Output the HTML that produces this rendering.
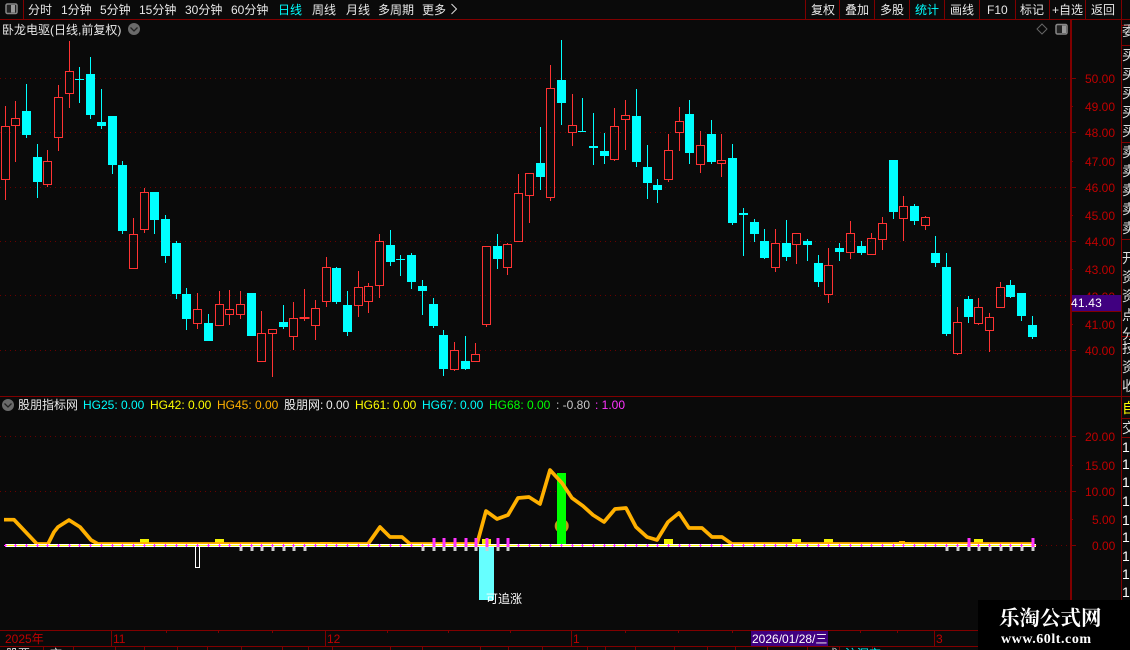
<!DOCTYPE html>
<html lang="zh">
<head>
<meta charset="utf-8">
<title>卧龙电驱</title>
<style>
html,body{margin:0;padding:0;background:#0a0a0a;width:1130px;height:650px;overflow:hidden}
#root{position:relative;width:1130px;height:650px;overflow:hidden;font:12px/14px "Liberation Sans","WenQuanYi Zen Hei","Noto Sans CJK SC",sans-serif;color:#e8e8e8;background:#0a0a0a}
svg{position:absolute;left:0;top:0}
span,div.t{position:absolute;white-space:nowrap}
.c{color:#0ff}.y{color:#ff0}.o{color:#ffb000}.g{color:#0f0}.m{color:#f3f}.w{color:#eee}.a{color:#c00000}
#rp{position:absolute;left:1122px;top:0;width:8px;height:650px;overflow:hidden;font-size:14px;color:#ddd}
</style>
</head>
<body>
<div id="root">
<svg width="1130" height="650" viewBox="0 0 1130 650" shape-rendering="crispEdges">
<!-- grid -->
<path d="M0 78.5H1070M0 132.5H1070M0 187.5H1070M0 241.5H1070M0 295.5H1070M0 350.5H1070M0 436.5H1070M0 491.5H1070M1036 545.5H1070" stroke="#6a0000" stroke-width="1" stroke-dasharray="1 4" fill="none"/>
<!-- frame -->
<path d="M0 19.5H1130M0 396.5H1130M0 630.5H1121M0 646.5H1121M1070.5 19V630M1071.5 19V630M1121.5 0V650M1121 25.5H1130M1121 45.5H1130M1121 142.5H1130M1121 239.5H1130M1121 336.5H1130M1121 418.5H1130M1121 437.5H1130M23.5 0V19M805.5 0V19M839.5 0V19M874.5 0V19M909.5 0V19M944.5 0V19M979.5 0V19M1015.5 0V19M1049.5 0V19M1085.5 0V19M111.5 630V646M325.5 630V646M571.5 630V646M934.5 630V646M166.5 630V633M218.5 630V633M272.5 630V633M387.5 630V633M448.5 630V633M510.5 630V633M625.5 630V633M678.5 630V633M732.5 630V633M860.5 630V633M897.5 630V633M43.5 646V650M73.5 646V650M115.5 646V650M144.5 646V650M177.5 646V650M207.5 646V650M241.5 646V650M282.5 646V650M308.5 646V650M332.5 646V650M390.5 646V650M422.5 646V650M480.5 646V650M508.5 646V650M542.5 646V650M587.5 646V650M605.5 646V650M635.5 646V650M674.5 646V650M707.5 646V650M735.5 646V650M767.5 646V650M807.5 646V650M839.5 646V650M872.5 646V650M1071 78.5H1076M1071 106.5H1073M1071 132.5H1076M1071 161.5H1073M1071 187.5H1076M1071 215.5H1073M1071 241.5H1076M1071 269.5H1073M1071 324.5H1073M1071 350.5H1076M1071 436.5H1076M1071 465.5H1073M1071 491.5H1076M1071 519.5H1073M1071 545.5H1076" stroke="#800000" stroke-width="1" fill="none"/>
<!-- red candles -->
<path fill="none" stroke="#ff3333" stroke-width="1" d="M1.5 126.5h8v53h-8zM5.5 106V126M5.5 180V200M11.5 118.5h8v7h-8zM15.5 101V118M15.5 126V162M43.5 161.5h8v23h-8zM47.5 150V161M47.5 185V187M54.5 97.5h8v40h-8zM58.5 85V97M58.5 138V151M65.5 71.5h8v22h-8zM69.5 41V71M69.5 94V108M140.5 192.5h8v37h-8zM144.5 188V192M144.5 230V233M129.5 234.5h8v34h-8zM133.5 218V234M193.5 309.5h8v14h-8zM197.5 293V309M197.5 324V329M215.5 304.5h8v21h-8zM219.5 291V304M225.5 309.5h8v5h-8zM229.5 290V309M229.5 315V325M236.5 304.5h8v10h-8zM240.5 291V304M240.5 315V319M257.5 333.5h8v28h-8zM261.5 311V333M268.5 329.5h8v4h-8zM272.5 334V377M289.5 318.5h8v18h-8zM293.5 302V318M293.5 337V350M300 317.5h9v1h-9zM304.5 289V321M311.5 308.5h8v17h-8zM315.5 300V308M315.5 326V340M322.5 267.5h8v34h-8zM326.5 257V267M326.5 302V307M354.5 287.5h8v18h-8zM358.5 271V287M358.5 306V317M364.5 286.5h8v15h-8zM368.5 283V286M368.5 302V313M375.5 241.5h8v44h-8zM379.5 234V241M379.5 286V298M450.5 350.5h8v19h-8zM454.5 342V350M454.5 370V371M471.5 354.5h8v7h-8zM475.5 343V354M482.5 246.5h8v78h-8zM486.5 325V327M503.5 244.5h8v23h-8zM507.5 243V244M507.5 268V275M514.5 193.5h8v48h-8zM518.5 174V193M525.5 173.5h8v22h-8zM529.5 196V223M546.5 88.5h8v109h-8zM550.5 65V88M550.5 198V201M568.5 125.5h8v7h-8zM572.5 94V125M572.5 133V146M610.5 126.5h8v33h-8zM614.5 108V126M614.5 160V161M621.5 115.5h8v4h-8zM625.5 100V115M625.5 120V150M664.5 150.5h8v29h-8zM668.5 134V150M668.5 180V182M675.5 121.5h8v11h-8zM679.5 107V121M679.5 133V151M696.5 145.5h8v19h-8zM700.5 131V145M700.5 165V173M717.5 160.5h8v3h-8zM721.5 134V160M721.5 164V177M771.5 243.5h8v24h-8zM775.5 229V243M775.5 268V272M792.5 233.5h8v11h-8zM796.5 245V264M824.5 265.5h8v29h-8zM828.5 248V265M828.5 295V303M846.5 233.5h8v19h-8zM850.5 221V233M850.5 253V259M867.5 238.5h8v16h-8zM871.5 233V238M878.5 223.5h8v16h-8zM882.5 217V223M882.5 240V250M899.5 206.5h8v12h-8zM903.5 196V206M903.5 219V241M921.5 217.5h8v8h-8zM925.5 216V217M925.5 226V230M953.5 322.5h8v31h-8zM957.5 307V322M957.5 354V355M974.5 307.5h8v16h-8zM978.5 298V307M978.5 324V325M985.5 317.5h8v13h-8zM989.5 313V317M989.5 331V352M996.5 287.5h8v20h-8zM1000.5 282V287"/>
<!-- cyan wicks -->
<path fill="none" stroke="#00ffff" stroke-width="1" d="M26.5 84V138M37.5 144V198M79.5 67V103M90.5 57V119M101.5 89V129M112.5 116V174M122.5 161V234M154.5 192V234M165.5 215V263M176.5 241V299M186.5 288V330M208.5 314V341M283.5 305V329M336.5 267V304M347.5 291V336M390.5 230V266M400.5 255V276M411.5 253V289M422.5 280V315M433.5 298V328M443.5 330V376M465.5 336V370M497.5 234V269M540.5 127V190M561.5 40V125M582.5 98V132M593.5 113V165M604.5 133V164M636.5 89V167M647.5 145V199M657.5 179V203M689.5 100V164M711.5 120V164M732.5 144V225M743.5 208V256M754.5 219V242M764.5 229V259M786.5 220V261M807.5 239V261M818.5 255V287M839.5 243V261M861.5 241V255M893.5 160V219M914.5 204V225M935.5 236V267M946.5 253V336M968.5 296V323M1010.5 280V298M1021.5 293V321M1032.5 316V339"/>
<!-- cyan bodies -->
<path fill="#00ffff" d="M22 111h9v24h-9zM33 157h9v25h-9zM75 79h9v1h-9zM86 74h9v41h-9zM97 122h9v4h-9zM108 116h9v49h-9zM118 165h9v66h-9zM150 192h9v28h-9zM161 219h9v37h-9zM172 243h9v51h-9zM182 294h9v25h-9zM204 323h9v18h-9zM247 293h9v43h-9zM279 322h9v5h-9zM332 268h9v34h-9zM343 305h9v27h-9zM386 245h9v17h-9zM396 259h9v1h-9zM407 255h9v27h-9zM418 286h9v5h-9zM429 304h9v22h-9zM439 335h9v34h-9zM461 361h9v8h-9zM493 246h9v13h-9zM536 163h9v14h-9zM557 80h9v23h-9zM578 131h8v1h-8zM589 146h9v2h-9zM600 151h9v5h-9zM632 116h9v46h-9zM643 167h9v16h-9zM653 185h9v5h-9zM685 114h9v39h-9zM707 134h9v28h-9zM728 158h9v65h-9zM739 213h9v2h-9zM750 222h9v12h-9zM760 241h9v17h-9zM782 243h9v14h-9zM803 241h9v4h-9zM814 263h9v19h-9zM835 248h9v4h-9zM857 246h9v7h-9zM889 160h9v52h-9zM910 206h9v15h-9zM931 253h9v10h-9zM942 267h9v67h-9zM964 299h9v18h-9zM1006 285h9v12h-9zM1017 293h9v23h-9zM1028 325h9v12h-9z"/>
<!-- indicator: yellow blocks -->
<path fill="#f0f000" d="M140 539h9v5h-9zM215 539h9v5h-9zM482 539h9v5h-9zM664 539h9v5h-9zM792 539h9v5h-9zM824 539h9v5h-9zM974 539h9v5h-9z"/>
<circle cx="561.7" cy="526" r="7" fill="#c09a18" shape-rendering="auto"/>
<path fill="#00ff00" d="M557 473h9v71h-9z"/>
<path fill="#66ffff" d="M479 547h15v53h-15z"/>
<rect x="195.5" y="545.5" width="4" height="22" fill="none" stroke="#fff" stroke-width="1"/>
<!-- orange line -->
<path fill="none" stroke="#ffb000" stroke-width="3.7" stroke-linejoin="round" shape-rendering="auto" d="M4 519.7L14 519.7L37 544L48 544L54 532L58 527L69 520L80 527L91 540L98 544H368L380 527L390 537L402 537L410 544H477L486 511L497 519L508 515L518 498L529 497L540 504L550 470L562 483L572 498L583 506L593 515L604 522L615 509L626 508L636 527L647 537L657 540L668 522L679 513L689 528L702 528L712 537L722 537L732 544H1034"/>
<path fill="#ffb000" d="M320 542h12v2h-12zM893 542h18v2h-18zM899 541h6v1h-6z"/>
<!-- zero line -->
<path d="M5 544h1031v1H5zM5 546h1031v1H5z" fill="#ffffff"/>
<path d="M5 545h1031v1H5z" fill="#ffff00"/>
<!-- gray arrows -->
<path stroke="#cfcfcf" stroke-width="3" fill="none" d="M241 547v4M252 547v4M262 547v4M273 547v4M284 547v4M294 547v4M305 547v4M423 547v4M434 547v4M444 547v4M455 547v4M466 547v4M476 547v4M487 547v4M498 547v4M508 547v4M947 547v4M958 547v4M969 547v4M979 547v4M990 547v4M1001 547v4M1011 547v4M1022 547v4M1033 547v4"/>
<!-- magenta bars -->
<path stroke="#ff33ff" stroke-width="3" fill="none" d="M434 538v9M444 538v9M455 538v9M466 538v9M476 538v9M487 538v9M498 538v9M508 538v9M969 538v9M1033 538v9"/>
<!-- magenta crosses -->
<path stroke="#ff33ff" stroke-width="1" fill="none" d="M5.5 544v3m-1.5-1.5h3M15.5 544v3m-1.5-1.5h3M26.5 544v3m-1.5-1.5h3M37.5 544v3m-1.5-1.5h3M47.5 544v3m-1.5-1.5h3M58.5 544v3m-1.5-1.5h3M69.5 544v3m-1.5-1.5h3M79.5 544v3m-1.5-1.5h3M90.5 544v3m-1.5-1.5h3M101.5 544v3m-1.5-1.5h3M112.5 544v3m-1.5-1.5h3M122.5 544v3m-1.5-1.5h3M133.5 544v3m-1.5-1.5h3M144.5 544v3m-1.5-1.5h3M154.5 544v3m-1.5-1.5h3M165.5 544v3m-1.5-1.5h3M176.5 544v3m-1.5-1.5h3M186.5 544v3m-1.5-1.5h3M197.5 544v3m-1.5-1.5h3M208.5 544v3m-1.5-1.5h3M219.5 544v3m-1.5-1.5h3M229.5 544v3m-1.5-1.5h3M240.5 544v3m-1.5-1.5h3M251.5 544v3m-1.5-1.5h3M261.5 544v3m-1.5-1.5h3M272.5 544v3m-1.5-1.5h3M283.5 544v3m-1.5-1.5h3M293.5 544v3m-1.5-1.5h3M304.5 544v3m-1.5-1.5h3M315.5 544v3m-1.5-1.5h3M326.5 544v3m-1.5-1.5h3M336.5 544v3m-1.5-1.5h3M347.5 544v3m-1.5-1.5h3M358.5 544v3m-1.5-1.5h3M368.5 544v3m-1.5-1.5h3M379.5 544v3m-1.5-1.5h3M390.5 544v3m-1.5-1.5h3M400.5 544v3m-1.5-1.5h3M411.5 544v3m-1.5-1.5h3M422.5 544v3m-1.5-1.5h3M518.5 544v3m-1.5-1.5h3M529.5 544v3m-1.5-1.5h3M540.5 544v3m-1.5-1.5h3M550.5 544v3m-1.5-1.5h3M561.5 544v3m-1.5-1.5h3M572.5 544v3m-1.5-1.5h3M582.5 544v3m-1.5-1.5h3M593.5 544v3m-1.5-1.5h3M604.5 544v3m-1.5-1.5h3M614.5 544v3m-1.5-1.5h3M625.5 544v3m-1.5-1.5h3M636.5 544v3m-1.5-1.5h3M647.5 544v3m-1.5-1.5h3M657.5 544v3m-1.5-1.5h3M668.5 544v3m-1.5-1.5h3M679.5 544v3m-1.5-1.5h3M689.5 544v3m-1.5-1.5h3M700.5 544v3m-1.5-1.5h3M711.5 544v3m-1.5-1.5h3M721.5 544v3m-1.5-1.5h3M732.5 544v3m-1.5-1.5h3M743.5 544v3m-1.5-1.5h3M754.5 544v3m-1.5-1.5h3M764.5 544v3m-1.5-1.5h3M775.5 544v3m-1.5-1.5h3M786.5 544v3m-1.5-1.5h3M796.5 544v3m-1.5-1.5h3M807.5 544v3m-1.5-1.5h3M818.5 544v3m-1.5-1.5h3M828.5 544v3m-1.5-1.5h3M839.5 544v3m-1.5-1.5h3M850.5 544v3m-1.5-1.5h3M861.5 544v3m-1.5-1.5h3M871.5 544v3m-1.5-1.5h3M882.5 544v3m-1.5-1.5h3M893.5 544v3m-1.5-1.5h3M903.5 544v3m-1.5-1.5h3M914.5 544v3m-1.5-1.5h3M925.5 544v3m-1.5-1.5h3M935.5 544v3m-1.5-1.5h3M946.5 544v3m-1.5-1.5h3M957.5 544v3m-1.5-1.5h3M968.5 544v3m-1.5-1.5h3M978.5 544v3m-1.5-1.5h3M989.5 544v3m-1.5-1.5h3M1000.5 544v3m-1.5-1.5h3M1010.5 544v3m-1.5-1.5h3M1021.5 544v3m-1.5-1.5h3"/>
<!-- icons -->
<g shape-rendering="auto">
<rect x="6" y="4" width="11" height="9.5" rx="1.5" fill="#222" stroke="#888" stroke-width="1.5"/>
<rect x="11" y="5" width="4" height="7.5" fill="#999"/>
<rect x="1056" y="24.5" width="11" height="9.5" rx="1.5" fill="#222" stroke="#888" stroke-width="1.5"/>
<rect x="1062" y="25.5" width="4" height="7.5" fill="#999"/>
<path d="M1042 24l5 5-5 5-5-5z" fill="none" stroke="#666" stroke-width="1"/>
<circle cx="134" cy="29" r="6" fill="#6a6a6a"/>
<path d="M130.5 27.5l3.5 3.5 3.5-3.5" fill="none" stroke="#222" stroke-width="1.3"/>
<circle cx="8" cy="405" r="6" fill="#6a6a6a"/>
<path d="M4.5 403.5l3.5 3.5 3.5-3.5" fill="none" stroke="#222" stroke-width="1.3"/>
<path d="M451.5 4l5 5-5 5" fill="none" stroke="#ddd" stroke-width="1"/>
</g>
</svg>

<!-- top bar -->
<span style="left:28px;top:3px">分时</span>
<span style="left:61px;top:3px">1分钟</span>
<span style="left:100px;top:3px">5分钟</span>
<span style="left:139px;top:3px">15分钟</span>
<span style="left:185px;top:3px">30分钟</span>
<span style="left:231px;top:3px">60分钟</span>
<span class="c" style="left:278px;top:3px">日线</span>
<span style="left:312px;top:3px">周线</span>
<span style="left:346px;top:3px">月线</span>
<span style="left:378px;top:3px">多周期</span>
<span style="left:422px;top:3px">更多</span>
<span style="left:811px;top:3px">复权</span>
<span style="left:845px;top:3px">叠加</span>
<span style="left:880px;top:3px">多股</span>
<span class="c" style="left:915px;top:3px">统计</span>
<span style="left:950px;top:3px">画线</span>
<span style="left:987px;top:3px">F10</span>
<span style="left:1020px;top:3px">标记</span>
<span style="left:1052px;top:3px">+自选</span>
<span style="left:1091px;top:3px">返回</span>

<span style="left:2px;top:23px">卧龙电驱(日线,前复权)</span>

<!-- price axis -->
<span class="a" style="left:1085px;top:72px">50.00</span>
<span class="a" style="left:1085px;top:100px">49.00</span>
<span class="a" style="left:1085px;top:126px">48.00</span>
<span class="a" style="left:1085px;top:155px">47.00</span>
<span class="a" style="left:1085px;top:181px">46.00</span>
<span class="a" style="left:1085px;top:209px">45.00</span>
<span class="a" style="left:1085px;top:235px">44.00</span>
<span class="a" style="left:1085px;top:263px">43.00</span>
<span class="a" style="left:1085px;top:290px">42.00</span>
<span class="a" style="left:1085px;top:318px">41.00</span>
<span class="a" style="left:1085px;top:344px">40.00</span>
<div style="position:absolute;left:1072px;top:295px;width:49px;height:16px;background:#400080;border-bottom:1px solid #800000"></div>
<span style="left:1071px;top:296px;color:#fff;letter-spacing:.2px">41.43</span>

<!-- indicator header -->
<span style="left:18px;top:398px">股朋指标网</span>
<span class="c" style="left:83px;top:398px">HG25:</span><span class="c" style="left:121px;top:398px">0.00</span>
<span class="y" style="left:150px;top:398px">HG42:</span><span class="y" style="left:188px;top:398px">0.00</span>
<span class="o" style="left:217px;top:398px">HG45:</span><span class="o" style="left:255px;top:398px">0.00</span>
<span class="w" style="left:284px;top:398px">股朋网:</span><span class="w" style="left:326px;top:398px">0.00</span>
<span class="y" style="left:355px;top:398px">HG61:</span><span class="y" style="left:393px;top:398px">0.00</span>
<span class="c" style="left:422px;top:398px">HG67:</span><span class="c" style="left:460px;top:398px">0.00</span>
<span class="g" style="left:489px;top:398px">HG68:</span><span class="g" style="left:527px;top:398px">0.00</span>
<span style="left:556px;top:398px;color:#c8c8c8">: -0.80</span>
<span class="m" style="left:595px;top:398px">: 1.00</span>

<span class="a" style="left:1085px;top:430px">20.00</span>
<span class="a" style="left:1085px;top:459px">15.00</span>
<span class="a" style="left:1085px;top:485px">10.00</span>
<span class="a" style="left:1092px;top:513px">5.00</span>
<span class="a" style="left:1092px;top:539px">0.00</span>

<span style="left:486px;top:592px;color:#fff">可追涨</span>

<!-- time axis -->
<span class="a" style="left:5px;top:632px">2025年</span>
<span class="a" style="left:113px;top:632px">11</span>
<span class="a" style="left:327px;top:632px">12</span>
<span class="a" style="left:573px;top:632px">1</span>
<span class="a" style="left:936px;top:632px">3</span>
<div style="position:absolute;left:751px;top:631px;width:77px;height:15px;background:#400080"></div>
<span style="left:752px;top:632px;color:#fff">2026/01/28/三</span>

<!-- bottom clipped row -->
<span style="left:6px;top:647px">股票</span>
<span style="left:50px;top:647px">市</span>
<span style="left:826px;top:647px">成</span>
<span class="c" style="left:845px;top:647px">沪深京</span>

<!-- right side panel -->
<div id="rp">
<span style="left:0;top:24px">委</span>
<span style="left:0;top:48px">买</span><span style="left:0;top:67px">买</span><span style="left:0;top:86px">买</span><span style="left:0;top:105px">买</span><span style="left:0;top:124px">买</span>
<span style="left:0;top:145px">卖</span><span style="left:0;top:164px">卖</span><span style="left:0;top:183px">卖</span><span style="left:0;top:202px">卖</span><span style="left:0;top:221px">卖</span>
<span style="left:0;top:251px">开</span><span style="left:0;top:270px">资</span><span style="left:0;top:289px">资</span><span style="left:0;top:308px">点</span><span style="left:0;top:327px">分</span>
<span style="left:0;top:341px">技</span><span style="left:0;top:360px">资</span><span style="left:0;top:379px">收</span>
<span style="left:0;top:401px;color:#ff0">自</span>
<span style="left:0;top:421px">交</span>
<span style="left:0;top:440px;color:#fff">1</span><span style="left:0;top:457px;color:#fff">1</span><span style="left:0;top:475px;color:#fff">1</span><span style="left:0;top:494px;color:#fff">1</span><span style="left:0;top:513px;color:#fff">1</span><span style="left:0;top:530px;color:#fff">1</span><span style="left:0;top:549px;color:#fff">1</span><span style="left:0;top:567px;color:#fff">1</span><span style="left:0;top:585px;color:#fff">1</span>
</div>

<!-- watermark -->
<div style="position:absolute;left:978px;top:600px;width:152px;height:50px;background:#000"></div>
<span style="left:999px;top:607px;font:bold 20.5px/24px 'Liberation Serif','Noto Serif CJK SC',serif;color:#fff">乐淘公式网</span>
<span style="left:1001px;top:632px;font:bold 14px/16px 'Liberation Serif',serif;color:#fff;letter-spacing:.55px">www.60lt.com</span>
</div>
</body>
</html>
